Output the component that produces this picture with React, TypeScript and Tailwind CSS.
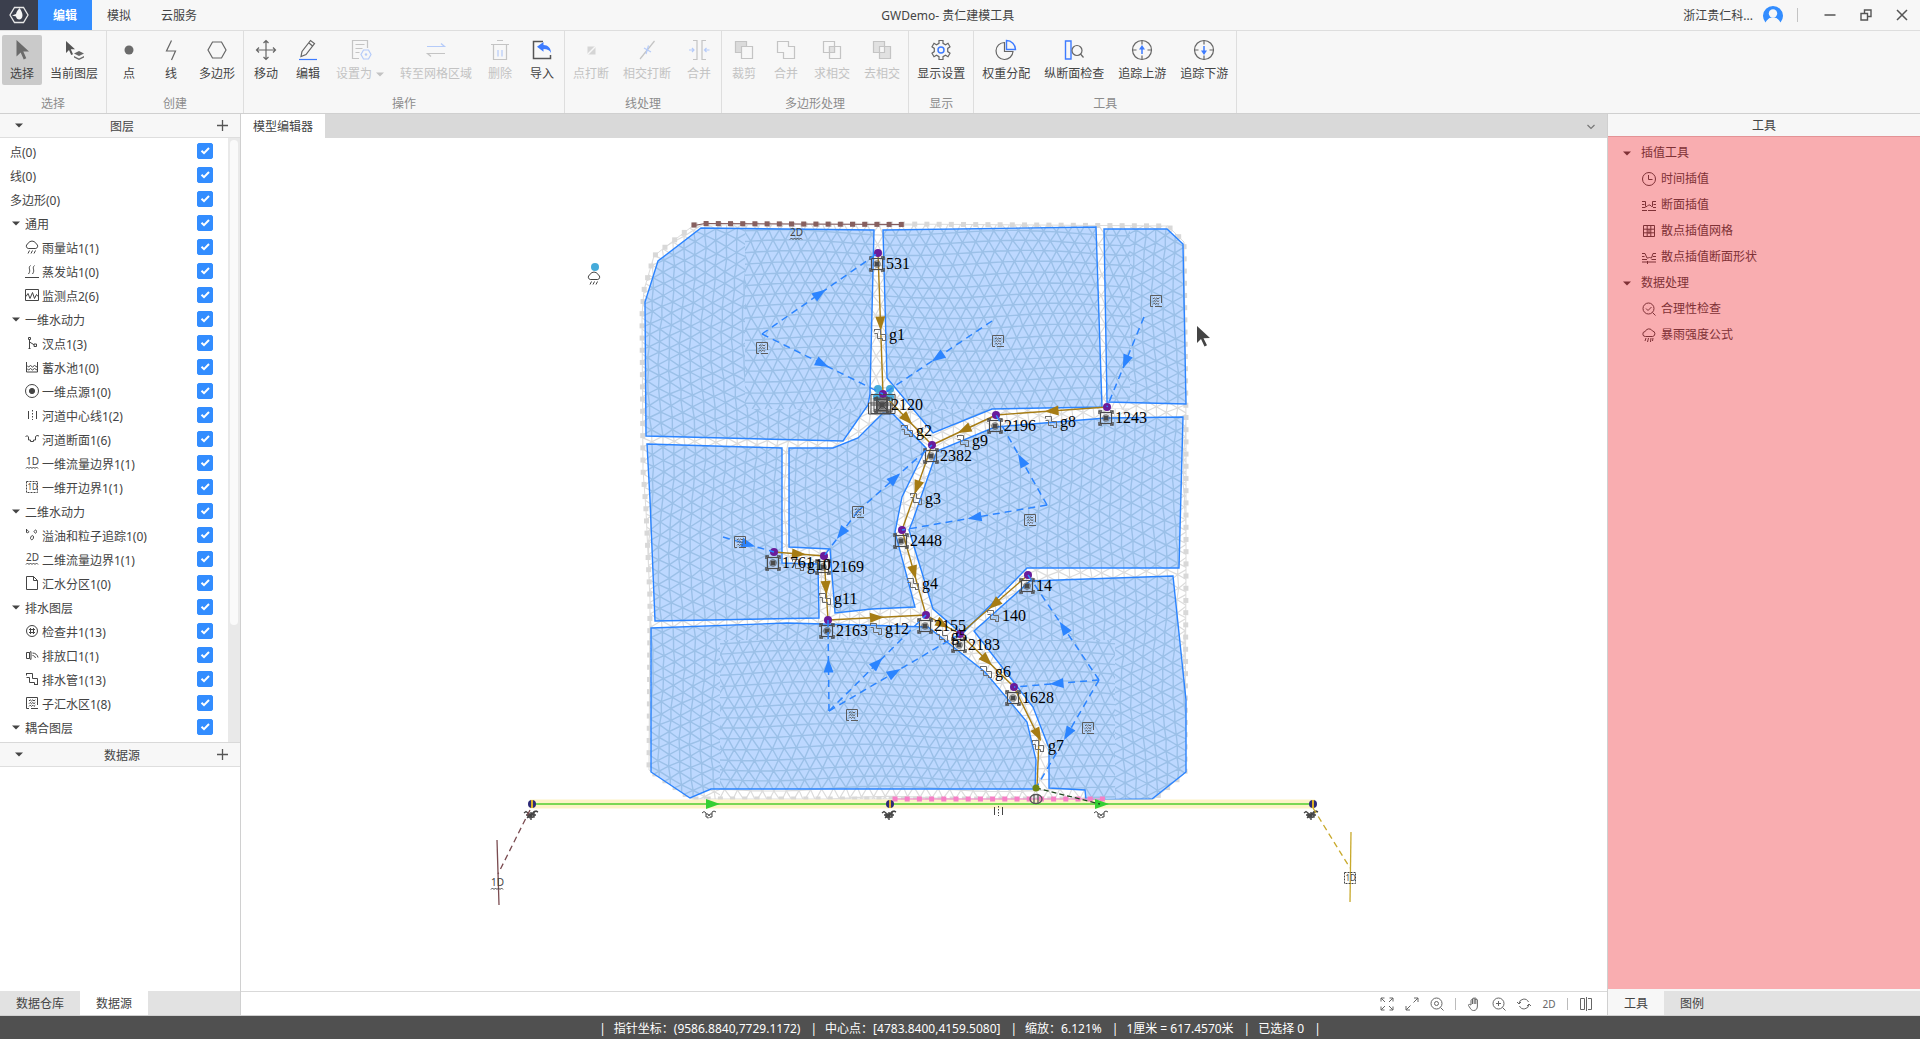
import React from 'react';

type Pt = [number, number];

/* ---------- small icons (14x14) ---------- */

const glyphs: Record<string, React.ReactNode> = {
  rain: <path d="M3.200 8.500A2.500 2.500 0 0 1 3 3.700A4.200 3.800 0 0 1 11 3.700A2.500 2.500 0 0 1 10.800 8.500zM4.500 10.500L3 13.500M7.500 10.500L6 13.500M10.500 10.500L9 13.500" />,
  steam: <path d="M0 13.500h14M5.500 1.500C2.500 4 6.500 6 3.500 10M9.500 1.500C6.500 4 10.500 6 7.500 10" />,
  monitor: <path d="M.5 1.500h13v11H.5zM1 8.500l2-3 2 5 2.500-6 2 6 2-4 1.500 2" />,
  branch: <path d="M4.500 3.500v9M4.500 6l5 3M3.500 1.500h2v2h-2zM9 8h2.500v2.500H9zM3.500 12.500h2" />,
  pond: <path d="M1.500 2v10h11V2M2 5.500l1.500 1.500 2-1.500 2 1.500 2-1.500 2.500 1.500M2 8.500l1.500 1.500 2-1.500 2 1.500 2-1.500 2.500 1.500" />,
  source: <><circle cx="7" cy="7" r="6.500" /><circle cx="7" cy="7" r="2.600" fill="currentColor" /></>,
  center: <><path d="M3.500 3v8M11.500 3v8" /><path d="M7.500 2v10" strokeDasharray="1.500 1.500" /></>,
  section: <path d="M.5 5l1.500-1.500L3.500 5v3M3.500 8h2v1.500h3V8h2V4.500l1.500-1 2 .5" />,
  one: <><text x="1" y="8.500" fontSize="10" fill="currentColor" stroke="none">1D</text><path d="M1 12.500L2.500 11 4 12.500 5.500 11 7 12.500 8.500 11 10 12.500 11.500 11 13 12.500" /></>,
  two: <><text x="1" y="8.500" fontSize="10" fill="currentColor" stroke="none">2D</text><path d="M1 12.500L2.500 11 4 12.500 5.500 11 7 12.500 8.500 11 10 12.500 11.500 11 13 12.500" /></>,
  open: <><path d="M1.500 1.500h11v11h-11z" strokeDasharray="2 1" /><text x="2.500" y="9.800" fontSize="8" fill="currentColor" stroke="none">1D</text></>,
  drops: <path d="M1.500 1v3.500c2.500 1 3.500-1.500 0-2.500M9 3.500c1-2 2.500-2 2.500 0s-1.500 2.500-2.500 0zM5.500 10.500c0-3 3-4 3-1.500s-2 4-3 1.500z" />,
  doc: <path d="M1.500.5h7l4 4v9h-11zM8.500.5v4h4" />,
  well: <><circle cx="7" cy="7" r="5.500" /><path d="M5.500 4v6M8.500 4v6M4 5.500h6M4 8.500h6" /></>,
  outfall: <path d="M1.500 4.500h3v6h-3zM4.500 4.500l1.500-1v8l-1.500-1M7.500 5c3 0 5 2 5.500 4.500M7.500 7.500c1.500 0 2.500 1 3 2.500" />,
  pipe: <path d="M1 1.500H7.500V6.500H12.500V13M1.500 5.500H4.500V10.500H9.500V13M1.500 1.500V3.500M9.500 12.500H12.500" />,
  waves: <path d="M12.500 9V1.500H1.500V12.500H4M6 12.500H13M4 5L5.200 3.800 6.500 5 7.800 3.800 9 5 10.300 3.800M4 7.700L5.200 6.500 6.500 7.700 7.800 6.500 9 7.700 10.300 6.500M4 10.400L5.200 9.200 6.500 10.400 7.800 9.200 9 10.400 10.300 9.200" />,
  clock: <><circle cx="7" cy="7" r="6.500" /><path d="M6.500 3v4.500h4" /></>,
  profile: <path d="M0 3.500H3.500V8.500H5L6.500 7H8L9.500 8.500H10.500V3.500H14M0 6.500H2.500M11.500 6.500H14M0 9.500H3.500M11 9.500H14M0 12.500H5M6 12.500H14" />,
  profileFill: <path d="M0 3.500H3L5 8H6.500L7.500 7 8.500 8H9.500L11 3.500H14M0 6.500H2.500M11 6.500H14M0 9.500H5M9.500 9.500H14M0 12H14M5.500 11V14" />,
  mesh: <path d="M1.500 1.500h11v11h-11zM5.200 1.500v11M8.800 1.500v11M1.500 5.200h11M1.500 8.800h11M7 5v5" />,
  check: <><circle cx="6.500" cy="6.500" r="5.500" /><path d="M4 6.500l2 2 3.500-3.500M10.500 10.500l3 3" /></>,
  storm: <path d="M3.500 8.500a2.500 2.500 0 0 1-.3-5A4 4 0 0 1 10.500 3a2.800 2.800 0 0 1 .2 5.500zM4 10l-1 3M6.500 10l-1 4M9 10l-.5 4M11 10l-.5 3" />,
};

const Glyph = ({ name }: { name: string }) => (
  <svg width="14" height="14" viewBox="0 0 14 14" fill="none" stroke="currentColor" className="shrink-0" aria-hidden="true">
    {glyphs[name]}
  </svg>
);

const Caret = () => (
  <svg width="8" height="5" viewBox="0 0 8 5" className="shrink-0" aria-hidden="true">
    <path d="M0 .5h8L4 4.500z" fill="currentColor" />
  </svg>
);

/* ---------- ribbon ---------- */

const B = '#3d7bff';

const toolIcons: Record<string, React.ReactNode> = {
  cursor: <path d="M5.500 1v16.500l4.200-4 3 7 2.600-1.200-3-6.800h5.700z" fill="#6b6b6b" stroke="none" />,
  cursorLayer: <><path d="M3 2v12l3-3 2.200 5 1.800-.8-2.200-5H12z" fill="#555" stroke="none" /><path d="M11 14.500l5-2.500 5 2.500-5 2.500zM11 17l5 2.500 5-2.500v1.500L16 21l-5-2.500z" fill="#666" stroke="none" /></>,
  dot: <circle cx="11" cy="11" r="4.500" fill="#6b6b6b" stroke="none" />,
  line: <path d="M11.500 1.500L6.500 12h9l-4 9" />,
  hexagon: <path d="M6.500 3h9l4.500 8-4.500 8h-9L2 11z" />,
  move: <path d="M11 1.500v19M1.500 11h19M8.500 4L11 1.500 13.500 4M8.500 18l2.500 2.500 2.500-2.500M4 8.500L1.500 11 4 13.500M18 8.500l2.500 2.500-2.500 2.500" />,
  pencil: <><path d="M4 17.500l1-5L13.500 1.500l4 3L9 15.500zM12 4l3.500 3" /><path d="M2 20.500h18" stroke={B} /></>,
  setAs: <><path d="M9 19.500H2.500v-18h15V9M5.500 5.500h9M5.500 9.500h7M5.500 13.500h4" /><path d="M13.500 11h5l2.500 4.500-2.500 4.500h-5L11 15.500z" stroke={B} /><circle cx="16" cy="15.500" r="1.200" fill={B} stroke="none" /></>,
  convert: <><path d="M2 7.500h17.500L16 4.500" stroke={B} /><path d="M20 14.500H2.500l3.500 3" /></>,
  trash: <><path d="M2 5.500h18M8 1.500h6M4.500 6v14.500h13V6" /><path d="M9 11v6.500M13 11v6.500" stroke={B} /></>,
  importIn: <><path d="M12 2.500H2.500v17h17V16" stroke="#555" strokeWidth="1.500" /><path d="M12.500 3L6 7.800l6.500 5V10c4 0 6 1 7.500 4 0-5-3-8-7.500-8z" fill={B} stroke="none" /></>,
  splitPoint: <><path d="M7.500 7.500h8v8h-8z" fill="#999" stroke="none" /><path d="M7 16l9-9" stroke="#f7f7f7" strokeWidth="1.500" /></>,
  splitCross: <><path d="M4 20L18.500 2" /><path d="M8 9l7 4M12.500 6.500L10 15" stroke={B} /></>,
  merge: <><path d="M5 1.500h4v19H5M18 1.500h-4v19h4" /><path d="M1 11h5M4 9l2 2-2 2M21.500 11h-5M18.500 9l-2 2 2 2" stroke={B} /></>,
  clip: <><path d="M2.500 2.500h11v11h-11z" fill="#aaa" /><path d="M8.500 7.500h11v12h-11z" fill="#f7f7f7" /></>,
  union: <path d="M2.500 2.500h11v5h6v12h-11v-6h-6z" />,
  intersect: <><path d="M2.500 2.500h11v11h-11zM8.500 7.500h11v12h-11z" /><path d="M8.500 7.500h5v6h-5z" fill="#bbb" /></>,
  exclude: <><path d="M2.500 2.500h11v5h6v12h-11v-6h-6z" fill="#bbb" /><path d="M8.500 7.500h5v6h-5z" fill="#f7f7f7" /></>,
  gear: <><path d="M9 1.500h4v2.800l2.500 1.400L18 4.300l2 3.500-2.300 1.600v3.200l2.300 1.600-2 3.500-2.500-1.400L13 17.700v2.800H9v-2.800l-2.500-1.400L4 17.700l-2-3.500 2.300-1.600V9.400L2 7.800l2-3.500 2.500 1.400L9 4.300z" /><circle cx="11" cy="11" r="3" stroke={B} strokeWidth="1.500" /></>,
  pie: <><path d="M9.500 3.500a8.500 8.500 0 1 0 8.500 9H9.500z" /><path d="M11.500 1.500v9h9a9 9 0 0 0-9-9z" stroke={B} strokeWidth="1.400" /></>,
  longSection: <><path d="M2.500 2h5.500v18H2.500z" stroke={B} strokeWidth="1.400" /><circle cx="14" cy="11.500" r="5" /><path d="M17.500 15l3 3.500" /></>,
  traceUp: <><circle cx="11" cy="11" r="9.500" /><path d="M11 1.500v4M11 16.500v4M1.500 11h4M16.500 11h4" /><path d="M11 15V8.500" stroke={B} strokeWidth="1.500" /><path d="M8 10.500l3-4.500 3 4.500z" fill={B} stroke="none" /></>,
  traceDown: <><circle cx="11" cy="11" r="9.500" /><path d="M11 1.500v4M11 16.500v4M1.500 11h4M16.500 11h4" /><path d="M11 7v6.500" stroke={B} strokeWidth="1.500" /><path d="M8 11.500l3 4.500 3-4.500z" fill={B} stroke="none" /></>,
};

type Tool = { label: string; icon: string; active?: boolean; disabled?: boolean; menu?: boolean };

const ribbon: { name: string; tools: Tool[] }[] = [
  { name: '选择', tools: [{ label: '选择', icon: 'cursor', active: true }, { label: '当前图层', icon: 'cursorLayer' }] },
  { name: '创建', tools: [{ label: '点', icon: 'dot' }, { label: '线', icon: 'line' }, { label: '多边形', icon: 'hexagon' }] },
  {
    name: '操作',
    tools: [
      { label: '移动', icon: 'move' },
      { label: '编辑', icon: 'pencil' },
      { label: '设置为', icon: 'setAs', disabled: true, menu: true },
      { label: '转至网格区域', icon: 'convert', disabled: true },
      { label: '删除', icon: 'trash', disabled: true },
      { label: '导入', icon: 'importIn' },
    ],
  },
  {
    name: '线处理',
    tools: [
      { label: '点打断', icon: 'splitPoint', disabled: true },
      { label: '相交打断', icon: 'splitCross', disabled: true },
      { label: '合并', icon: 'merge', disabled: true },
    ],
  },
  {
    name: '多边形处理',
    tools: [
      { label: '裁剪', icon: 'clip', disabled: true },
      { label: '合并', icon: 'union', disabled: true },
      { label: '求相交', icon: 'intersect', disabled: true },
      { label: '去相交', icon: 'exclude', disabled: true },
    ],
  },
  { name: '显示', tools: [{ label: '显示设置', icon: 'gear' }] },
  {
    name: '工具',
    tools: [
      { label: '权重分配', icon: 'pie' },
      { label: '纵断面检查', icon: 'longSection' },
      { label: '追踪上游', icon: 'traceUp' },
      { label: '追踪下游', icon: 'traceDown' },
    ],
  },
];

const RibbonButton = ({ tool }: { tool: Tool }) => (
  <button
    type="button"
    disabled={tool.disabled}
    className={`flex h-[50px] min-w-10 flex-col items-center gap-1 rounded-xs px-1.5 pt-1 ${tool.active ? 'bg-[#cacaca]' : ''} ${tool.disabled ? 'text-[#c3c3c3]' : 'text-[#444]'}`}
  >
    <svg width="22" height="22" viewBox="0 0 22 22" fill="none" stroke="#666" strokeWidth="1.200" className={tool.disabled ? 'opacity-35' : ''} aria-hidden="true">
      {toolIcons[tool.icon]}
    </svg>
    <span className="flex items-center gap-1 leading-[18px]">
      {tool.label}
      {tool.menu && <span className="w-[10px]"><Caret /></span>}
    </span>
  </button>
);

const Ribbon = () => (
  <div className="flex h-[83px] shrink-0 border-b border-[#d0d0d0]">
    {ribbon.map((group) => (
      <section key={group.name} className="flex flex-col border-r border-[#dedede] px-0.5 pt-1 pb-px">
        <div className="flex gap-0.5">
          {group.tools.map((tool) => (
            <RibbonButton key={tool.label} tool={tool} />
          ))}
        </div>
        <h2 className="mt-auto text-center leading-4 text-[#8c8c8c]">{group.name}</h2>
      </section>
    ))}
  </div>
);

/* ---------- title bar ---------- */

const TitleBar = () => (
  <header className="flex h-[31px] shrink-0 items-stretch border-b border-[#dedede]">
    <div className="flex w-[38px] items-center justify-center bg-[#3b3f4d]">
      <svg width="20" height="18" viewBox="0 0 20 18" fill="none" stroke="#e8e8e8" strokeWidth="1.300" aria-label="logo">
        <path d="M5.500 1.500h9L19 9l-4.500 7.500h-9L1 9z" />
        <path d="M10.500 2c2 3 3 5 3 7.500 0 5-6 5-6.500 1L3 9.500 7 8c.5-2.500 2-4 3.500-6z" fill="#f5f5f5" stroke="none" />
      </svg>
    </div>
    <nav className="flex">
      <a href="#edit" className="flex items-center bg-[#338dff] px-[15px] pt-px font-semibold text-white">编辑</a>
      <a href="#simulate" className="flex items-center px-[15px] pt-px">模拟</a>
      <a href="#cloud" className="flex items-center px-[15px] pt-px">云服务</a>
    </nav>
    <h1 className="flex flex-1 items-center justify-center pt-px">GWDemo- 贵仁建模工具</h1>
    <div className="flex items-center">
      <span className="pt-px">浙江贵仁科...</span>
      <svg width="20" height="20" viewBox="0 0 20 20" className="ml-2.5" aria-hidden="true">
        <path d="M2.500 17.500a10 10 0 1 1 15 0c-1-2-2.500-3.500-4.500-4.500H7c-2 1-3.500 2.500-4.500 4.500z" fill="#338dff" />
        <circle cx="10" cy="8.500" r="4.200" fill="#f7f7f7" />
        <path d="M4 17.500c1-4 3-5 6-5s5 1 6 5z" fill="#f7f7f7" />
      </svg>
      <span className="mx-[14px] h-[14px] w-px bg-[#c4c4c4]" />
      <button type="button" aria-label="最小化" className="flex w-9 justify-center">
        <svg width="12" height="12" viewBox="0 0 12 12" stroke="#555" strokeWidth="1.500"><path d="M.5 6h11" /></svg>
      </button>
      <button type="button" aria-label="还原" className="flex w-9 justify-center">
        <svg width="12" height="12" viewBox="0 0 12 12" fill="none" stroke="#555" strokeWidth="1.400"><path d="M1 4.500h6.500V11H1zM4.500 4.500V1H11v6.500H7.500" /></svg>
      </button>
      <button type="button" aria-label="关闭" className="flex w-9 justify-center">
        <svg width="12" height="12" viewBox="0 0 12 12" stroke="#555" strokeWidth="1.500"><path d="M1 1l10 10M11 1L1 11" /></svg>
      </button>
    </div>
  </header>
);

/* ---------- left panel ---------- */

type Layer = { label: string; kind: 'root' | 'group' | 'leaf'; icon?: string };

const layers: Layer[] = [
  { label: '点(0)', kind: 'root' },
  { label: '线(0)', kind: 'root' },
  { label: '多边形(0)', kind: 'root' },
  { label: '通用', kind: 'group' },
  { label: '雨量站1(1)', kind: 'leaf', icon: 'rain' },
  { label: '蒸发站1(0)', kind: 'leaf', icon: 'steam' },
  { label: '监测点2(6)', kind: 'leaf', icon: 'monitor' },
  { label: '一维水动力', kind: 'group' },
  { label: '汊点1(3)', kind: 'leaf', icon: 'branch' },
  { label: '蓄水池1(0)', kind: 'leaf', icon: 'pond' },
  { label: '一维点源1(0)', kind: 'leaf', icon: 'source' },
  { label: '河道中心线1(2)', kind: 'leaf', icon: 'center' },
  { label: '河道断面1(6)', kind: 'leaf', icon: 'section' },
  { label: '一维流量边界1(1)', kind: 'leaf', icon: 'one' },
  { label: '一维开边界1(1)', kind: 'leaf', icon: 'open' },
  { label: '二维水动力', kind: 'group' },
  { label: '溢油和粒子追踪1(0)', kind: 'leaf', icon: 'drops' },
  { label: '二维流量边界1(1)', kind: 'leaf', icon: 'two' },
  { label: '汇水分区1(0)', kind: 'leaf', icon: 'doc' },
  { label: '排水图层', kind: 'group' },
  { label: '检查井1(13)', kind: 'leaf', icon: 'well' },
  { label: '排放口1(1)', kind: 'leaf', icon: 'outfall' },
  { label: '排水管1(13)', kind: 'leaf', icon: 'pipe' },
  { label: '子汇水区1(8)', kind: 'leaf', icon: 'waves' },
  { label: '耦合图层', kind: 'group' },
];

const indent = { root: 'pl-2.5', group: 'pl-3', leaf: 'pl-[25px]' };

const LayerRow = ({ layer }: { layer: Layer }) => (
  <li>
    <label className={`flex h-6 items-center pr-[15px] ${indent[layer.kind]}`}>
      {layer.kind === 'group' && <span className="mr-[5px]"><Caret /></span>}
      {layer.icon && <span className="mr-[3px]"><Glyph name={layer.icon} /></span>}
      <span className="flex-1 pt-[3px]">{layer.label}</span>
      <span className="grid">
        <input type="checkbox" defaultChecked className="col-start-1 row-start-1 size-4 appearance-none rounded-xs border border-[#338dff] checked:bg-[#338dff]" />
        <svg width="16" height="16" viewBox="0 0 16 16" fill="none" stroke="#fff" strokeWidth="2" className="pointer-events-none col-start-1 row-start-1" aria-hidden="true">
          <path d="M4.500 7.800l2.500 2.400 5-5.200" />
        </svg>
      </span>
    </label>
  </li>
);

const PanelHeader = ({ title }: { title: string }) => (
  <div className="flex h-6 shrink-0 items-center border-b border-[#dedede] pr-3 pl-[15px]">
    <button type="button" aria-label={`折叠${title}`} className="w-3"><Caret /></button>
    <h2 className="flex-1 pt-0.5 text-center">{title}</h2>
    <button type="button" aria-label={`添加${title}`}>
      <svg width="11" height="11" viewBox="0 0 11 11" stroke="#555" strokeWidth="1.300"><path d="M5.500 0v11M0 5.500h11" /></svg>
    </button>
  </div>
);

const LeftPanel = () => (
  <aside className="flex w-[241px] shrink-0 flex-col border-r border-[#d0d0d0]">
    <PanelHeader title="图层" />
    <div className="flex h-[604px] shrink-0 bg-white">
      <ul className="flex-1 overflow-hidden pt-px">
        {layers.map((layer) => (
          <LayerRow key={layer.label} layer={layer} />
        ))}
      </ul>
      <div className="w-3 bg-[#e9e9e9] px-0.5 pt-0.5">
        <div className="h-[485px] w-2 rounded-full bg-[#fafafa]" />
      </div>
    </div>
    <div className="border-t border-[#d9d9d9]">
      <PanelHeader title="数据源" />
    </div>
    <div className="flex-1 bg-white" />
    <div className="flex h-6 shrink-0 bg-[#e2e2e2]">
      <button type="button" className="px-4 pt-0.5">数据仓库</button>
      <button type="button" className="bg-white px-4 pt-0.5">数据源</button>
    </div>
  </aside>
);

/* ---------- map ---------- */

const catchments: string[] = [
  '701,228 874,230 870,394 868,405 843,441 646,436 645,302 658,261',
  '883,230 1096,227 1102,407 992,409 933,433 887,378',
  '1104,229 1167,229 1183,244 1186,404 1107,402',
  '1183,417 1106,418 995,427 937,451 913,520 909,530 933,609 962,634 1027,568 1179,568',
  '789,448 833,448 858,438 883,413 893,414 926,448 902,497 895,532 915,607 872,609 835,613 830,549 789,547',
  '647,444 782,448 782,563 818,564 819,618 655,621 650,500',
  '651,628 787,623 860,625 928,627 985,672 1027,722 1036,760 1035,789 711,789 690,798 651,772',
  '1173,576 1030,581 974,631 1033,707 1049,748 1049,788 1085,790 1086,800 1152,799 1186,772 1186,700',
];

const outline: Pt[] = [
  [694, 225], [664, 248], [654, 256], [644, 290], [642, 315], [643, 470], [646, 510], [650, 600], [649, 770], [692, 799],
  [895, 799], [1103, 799], [1154, 799], [1185, 773], [1186, 570], [1186, 420], [1184, 242], [1168, 226], [901, 224],
];

// triangulated lattice, gently warped so that it reads as an unstructured mesh
const buildMesh = (x0: number, x1: number, y0: number, y1: number, columns: boolean) => {
  const along = 12;
  const across = 10.5;
  const warp = (x: number, y: number): string => {
    const wx = x + 2.6 * Math.sin(y / 31 + x / 57) + 0.6 * Math.sin(x * 1.7 + y * 2.3);
    const wy = y + 2.6 * Math.sin(x / 37 - y / 61) + 0.6 * Math.sin(x * 2.1 - y * 1.3);
    return `${wx.toFixed(1)} ${wy.toFixed(1)}`;
  };
  const at = (i: number, j: number) => {
    const a = i * along + (j % 2 ? along / 2 : 0);
    const b = j * across;
    return columns ? warp(x0 + b, y0 + a) : warp(x0 + a, y0 + b);
  };
  const ni = Math.ceil((columns ? y1 - y0 : x1 - x0) / along) + 1;
  const nj = Math.ceil((columns ? x1 - x0 : y1 - y0) / across) + 1;
  let d = '';
  for (let j = 0; j < nj; j++) {
    for (let i = 0; i < ni; i++) {
      const k = j % 2 ? i + 1 : i;
      d += `M${at(i + 1, j)}L${at(i, j)}L${at(k, j + 1)}`;
      d += `M${at(i, j)}L${at(k - 1, j + 1)}`;
    }
  }
  return d;
};

const rowMesh = buildMesh(640, 1190, 222, 802, false);
const columnMesh = buildMesh(640, 1190, 222, 802, true);
const rowZone = 'M745 220H1130V409H745zM720 640H1115V802H720z';
const columnZone = 'M638 220H745V409H1130V220H1190V802H1115V640H720V802H638z';

// evenly spaced markers along a polyline
const markers = (pts: Pt[], step: number): Pt[] => {
  const out: Pt[] = [];
  let rest = 0;
  for (let i = 0; i < pts.length - 1; i++) {
    const [ax, ay] = pts[i];
    const [bx, by] = pts[i + 1];
    const len = Math.hypot(bx - ax, by - ay);
    let t = rest;
    for (; t < len; t += step) out.push([ax + ((bx - ax) * t) / len, ay + ((by - ay) * t) / len]);
    rest = t - len;
  }
  return out;
};

const Markers = ({ pts, step, color }: { pts: Pt[]; step: number; color: string }) => (
  <g fill={color}>
    {markers(pts, step).map(([x, y], i) => (
      <rect key={i} x={x - 2.5} y={y - 2.5} width="5" height="5" />
    ))}
  </g>
);

const nodes: Record<string, Pt> = {
  '531': [878, 253], '2120': [883, 394], '2382': [932, 445], '2196': [996, 415], '1243': [1107, 407], '2448': [902, 530],
  '1761': [774, 552], '2169': [824, 556], '2163': [828, 620], '2155': [926, 615], '2183': [960, 634], '14': [1028, 575], '1628': [1014, 687],
};
const outlet: Pt = [1036, 788];

const pipes: { name: string; from: Pt; to: Pt }[] = [
  { name: 'g1', from: nodes['531'], to: nodes['2120'] },
  { name: 'g2', from: nodes['2120'], to: nodes['2382'] },
  { name: 'g3', from: nodes['2382'], to: nodes['2448'] },
  { name: 'g4', from: nodes['2448'], to: nodes['2155'] },
  { name: 'g5', from: nodes['2155'], to: nodes['2183'] },
  { name: 'g6', from: nodes['2183'], to: nodes['1628'] },
  { name: 'g8', from: nodes['1243'], to: nodes['2196'] },
  { name: 'g9', from: nodes['2196'], to: nodes['2382'] },
  { name: 'g10', from: nodes['1761'], to: nodes['2169'] },
  { name: 'g11', from: nodes['2169'], to: nodes['2163'] },
  { name: 'g12', from: nodes['2163'], to: nodes['2155'] },
  { name: '140', from: nodes['14'], to: nodes['2183'] },
];

const runoff: [Pt, Pt][] = [
  [[762, 334], nodes['531']],
  [[762, 334], nodes['2120']],
  [[992, 321], nodes['2120']],
  [[1144, 317], nodes['1243']],
  [[1047, 505], nodes['2196']],
  [[1047, 505], nodes['2448']],
  [[858, 511], nodes['2382']],
  [[858, 511], nodes['2169']],
  [[723, 537], nodes['1761']],
  [[829, 711], nodes['2163']],
  [[829, 711], nodes['2155']],
  [[829, 711], nodes['2183']],
  [[1099, 680], nodes['14']],
  [[1099, 680], nodes['1628']],
  [[1099, 680], outlet],
];

const catchmentIcons: Pt[] = [[762, 348], [998, 341], [1156, 301], [1030, 520], [858, 512], [740, 542], [852, 715], [1088, 728]];

const mid = (a: Pt, b: Pt): Pt => [Math.round((a[0] + b[0]) / 2), Math.round((a[1] + b[1]) / 2)];

const Arrow = ({ from, to, at, color }: { from: Pt; to: Pt; at?: Pt; color: string }) => {
  const [x, y] = at ?? [(from[0] + to[0]) / 2, (from[1] + to[1]) / 2];
  const angle = (Math.atan2(to[1] - from[1], to[0] - from[0]) * 180) / Math.PI;
  return <path d="M-7 -5L7 0L-7 5z" fill={color} transform={`translate(${x} ${y}) rotate(${angle})`} />;
};

const MapGlyph = ({ name, x, y, color = '#444' }: { name: string; x: number; y: number; color?: string }) => (
  <g transform={`translate(${x - 7} ${y - 7})`} fill="none" stroke={color} style={{ color }}>
    {glyphs[name]}
  </g>
);

const Manhole = ({ x, y }: { x: number; y: number }) => (
  <g fill="none" stroke="#4a4a4a">
    <rect x={x - 5.5} y={y - 5.5} width="11" height="11" strokeWidth="1.200" />
    <path d={`M${x - 7} ${y - 4}v-3h3M${x + 7} ${y - 4}v-3h-3M${x - 7} ${y + 4}v3h3M${x + 7} ${y + 4}v3h-3`} strokeWidth="1.400" />
    <circle cx={x} cy={y} r="3.500" strokeWidth=".6" />
    <path d={`M${x - 2} ${y - 2}h4v4h-4z`} fill="#4a4a4a" />
  </g>
);

const RiverNode = ({ x }: { x: number }) => (
  <g>
    <circle cx={x} cy="804" r="4" fill="#2d2a78" />
    <path d={`M${x} 800v8`} stroke="#f0c020" strokeWidth="1.800" />
  </g>
);

const RiverSection = ({ x, heavy }: { x: number; heavy?: boolean }) => (
  <g fill="none" stroke="#444" strokeWidth={heavy ? 1.4 : 1}>
    <path d={`M${x - 7} 813l2-1.500 2 1.500v4h2v1.500M${x - 3} 814h2l1 2 1-2h2M${x + 1} 818v-1h2v-5l2-1 2 1`} />
    {heavy && <path d={`M${x - 4} 818l8-7M${x - 5} 815h10M${x} 812v8`} />}
  </g>
);

const MapView = () => (
  <svg viewBox="241 138 1366 853" className="h-full w-full" role="img" aria-label="管网模型图">
    <defs>
      <clipPath id="outlineClip"><polygon points={outline.map((p) => p.join(',')).join(' ')} /></clipPath>
      <clipPath id="blueClip">{catchments.map((c) => <polygon key={c} points={c} />)}</clipPath>
      <clipPath id="rowClip"><path d={rowZone} /></clipPath>
      <clipPath id="columnClip"><path d={columnZone} /></clipPath>
      <g id="mesh" fill="none">
        <g clipPath="url(#rowClip)"><path d={rowMesh} /></g>
        <g clipPath="url(#columnClip)"><path d={columnMesh} /></g>
      </g>
    </defs>

    <g clipPath="url(#outlineClip)"><use href="#mesh" stroke="#dcdcdc" strokeWidth="1.200" /></g>
    <polygon points={outline.map((p) => p.join(',')).join(' ')} fill="none" stroke="#dcdcdc" />
    <Markers pts={[...outline, outline[0]]} step={12.2} color="#d8d8d8" />

    <g fill="#bdd8ff">{catchments.map((c) => <polygon key={c} points={c} />)}</g>
    <g clipPath="url(#blueClip)"><use href="#mesh" stroke="#9bc0e8" strokeWidth="1.400" /></g>
    <g fill="none" stroke="#2b84ff" strokeWidth="1.400">{catchments.map((c) => <polygon key={c} points={c} />)}</g>

    {/* 2D inflow boundary */}
    <path d="M694 225.500L705 223.500L901 224.500" fill="none" stroke="#7f5558" />
    <Markers pts={[[694, 225], [705, 223.5], [902, 224.5]]} step={12.2} color="#87605f" />
    <MapGlyph name="two" x={796} y={234} />

    {/* river */}
    <path d="M530 804H1315" stroke="#fdf3c6" strokeWidth="9" />
    <path d="M532 804H1313" stroke="#4fce2e" strokeWidth="1.500" />
    <path d="M895 799H1103" stroke="#f57fc4" />
    <Markers pts={[[895, 799], [1104, 799]]} step={12.2} color="#f77fc6" />
    <Arrow from={[0, 0]} to={[1, 0]} at={[713, 804]} color="#35cf33" />
    <Arrow from={[0, 0]} to={[1, 0]} at={[1102, 804]} color="#35cf33" />
    <RiverNode x={532} />
    <RiverNode x={890} />
    <RiverNode x={1313} />
    <RiverSection x={531} heavy />
    <RiverSection x={709} />
    <RiverSection x={889} heavy />
    <RiverSection x={1101} />
    <RiverSection x={1311} heavy />
    <MapGlyph name="center" x={998} y={811} />

    {/* 1D boundaries */}
    <g fill="none" strokeWidth="1.300">
      <path d="M497 840L499 905" stroke="#7a4b50" />
      <path d="M530 810L498 874" stroke="#7a4b50" strokeDasharray="6 4" />
      <path d="M1351 832L1350 902" stroke="#c8a92b" />
      <path d="M1313 808L1350 868" stroke="#c8a92b" strokeDasharray="6 4" />
    </g>
    <MapGlyph name="one" x={497} y={884} />
    <MapGlyph name="open" x={1350} y={878} />

    {/* rain gauge */}
    <circle cx="595" cy="267" r="4" fill="#45abda" />
    <MapGlyph name="rain" x={594} y={278} />

    {/* pipes */}
    <g stroke="#a67c14" strokeWidth="1.400" fill="none">
      {pipes.map((p) => <path key={p.name} d={`M${p.from}L${p.to}`} />)}
      <path d="M1014 687L1039 738L1037 788" />
    </g>
    {pipes.map((p) => <Arrow key={p.name} from={p.from} to={p.to} color="#a67c14" />)}
    <Arrow from={[1014, 687]} to={[1040, 738]} at={[1038, 735]} color="#a67c14" />
    {pipes.map((p) => {
      const [x, y] = mid(p.from, p.to);
      return <MapGlyph key={p.name} name="pipe" x={x - 1} y={y + 11} color="#6b6b6b" />;
    })}
    <MapGlyph name="pipe" x={1038} y={746} color="#6b6b6b" />

    {/* monitoring points around 2120 */}
    <g fill="#45abda">
      <circle cx="878" cy="389" r="4" />
      <circle cx="890" cy="389" r="4" />
      <circle cx="877" cy="397" r="4" />
      <circle cx="890" cy="397" r="4" />
    </g>
    {Object.entries(nodes).map(([name, [x, y]]) => (
      <g key={name}>
        <circle cx={x} cy={y} r="4" fill="#6a1b9a" />
        <Manhole x={x - 1} y={y + 11} />
      </g>
    ))}
    <g fill="none" stroke="#4a4a4a">
      <path d="M871 394.500h24v19h-24zM868.500 403h22v11h-22zM874 398h18v14h-18zM877 396v18M887 396v18M871 405h23M878 401l9 9M887 401l-9 9" />
      <path d="M877 399h10v12h-10z" fill="#4a4a4a" fillOpacity=".6" />
    </g>

    {/* runoff directions */}
    <g fill="none" stroke="#2b84ff" strokeWidth="1.500" strokeDasharray="7 5">
      {runoff.map(([a, b], i) => <path key={i} d={`M${a}L${b}`} />)}
    </g>
    {runoff.map(([a, b], i) => <Arrow key={i} from={a} to={b} color="#2b84ff" />)}
    {catchmentIcons.map(([x, y]) => <MapGlyph key={x} name="waves" x={x} y={y} color="#5c5c5c" />)}

    {/* outfall */}
    <path d="M1036 788L1100 804" stroke="#20471f" strokeWidth="1.300" strokeDasharray="5 3" />
    <circle cx="1036" cy="788" r="3.500" fill="#6f8614" />
    <g fill="none" stroke="#555" strokeWidth="1.300"><ellipse cx="1036" cy="799" rx="6" ry="4.500" /><path d="M1034 795v9M1038 795v9" /></g>

    <g fill="#000" fontSize="16" className="font-['Liberation_Serif',serif]">
      {Object.entries(nodes).map(([name, [x, y]]) => <text key={name} x={x + 8} y={y + 16}>{name}</text>)}
      {pipes.map((p) => {
        const [x, y] = mid(p.from, p.to);
        return <text key={p.name} x={x + 8} y={y + 16}>{p.name}</text>;
      })}
      <text x="1048" y="751">g7</text>
    </g>

    <path d="M1197 326v17l4-4 3.500 7.500 2.500-1.300-3.500-7 6.500-.2z" fill="#444" />
  </svg>
);

const viewTools: { label: string; icon?: React.ReactNode; text?: string; divider?: boolean }[] = [
  { label: '全图', icon: <path d="M1 4.500V1h3.500M1 1l4 4M9.500 1H13v3.500M13 1L9 5M1 9.500V13h3.500M1 13l4-4M13 9.500V13H9.500M13 13L9 9" /> },
  { label: '展开', icon: <path d="M9 1h4v4M13 1L8.500 5.500M1 9v4h4M1 13l4.500-4.500" /> },
  { label: '定位', icon: <><circle cx="6.500" cy="6.500" r="5.500" /><circle cx="6.500" cy="6.500" r="2" /><path d="M10.500 10.500l3 3" /></> },
  { label: '平移', divider: true, icon: <path d="M4 8V3.500c0-1.200 1.500-1.200 1.500 0V2c0-1.200 1.700-1.200 1.700 0v-.5c0-1 1.600-1 1.600 0V3c0-1 1.600-1 1.600 0v6c0 3-1.500 4.500-3.700 4.500S4 12.500 1.500 8.500c-.5-1 .8-1.500 1.500-.8zM5.500 3v4M7.200 2v5M8.800 2v5" /> },
  { label: '放大', icon: <><circle cx="6.500" cy="6.500" r="5.500" /><path d="M10.500 10.500l3 3M4 6.500h5M6.500 4v5" /></> },
  { label: '刷新', icon: <path d="M2 6.500A5 5 0 0 1 11.500 5M12 7.500A5 5 0 0 1 2.500 9M0 5l2 2 2-2M10 9l2-2 2 2" /> },
  { label: '二维', text: '2D' },
  { label: '分屏', divider: true, icon: <path d="M1.500 1.500h4v11h-4zM7.500 0v14M9 1.500h3.500v11H9" /> },
];

const Workspace = () => (
  <main className="flex min-w-0 flex-1 flex-col bg-white">
    <div className="flex h-6 shrink-0 items-center justify-between bg-[#d9d9d9]">
      <button type="button" className="h-full bg-white px-3 pt-0.5">模型编辑器</button>
      <button type="button" aria-label="更多标签" className="px-3 pt-0.5">
        <svg width="8" height="6" viewBox="0 0 8 6" fill="none" stroke="#777" strokeWidth="1.200"><path d="M.5 1L4 4.500 7.500 1" /></svg>
      </button>
    </div>
    <div className="min-h-0 flex-1"><MapView /></div>
    <div className="flex h-6 shrink-0 items-center justify-end gap-[11px] border-t border-[#d9d9d9] pt-px pr-[14px]">
      {viewTools.map((tool) => (
        <React.Fragment key={tool.label}>
          {tool.divider && <span className="h-3 w-px bg-[#bbb]" />}
          <button type="button" aria-label={tool.label} className="flex w-[14px] justify-center text-[10px] text-[#666]">
            {tool.text ?? (
              <svg width="14" height="14" viewBox="0 0 14 14" fill="none" stroke="currentColor" className="shrink-0" aria-hidden="true">{tool.icon}</svg>
            )}
          </button>
        </React.Fragment>
      ))}
    </div>
  </main>
);

/* ---------- right panel ---------- */

const toolTree = [
  {
    name: '插值工具',
    items: [
      { label: '时间插值', icon: 'clock' },
      { label: '断面插值', icon: 'profile' },
      { label: '散点插值网格', icon: 'mesh' },
      { label: '散点插值断面形状', icon: 'profileFill' },
    ],
  },
  {
    name: '数据处理',
    items: [
      { label: '合理性检查', icon: 'check' },
      { label: '暴雨强度公式', icon: 'storm' },
    ],
  },
];

const RightPanel = () => (
  <aside className="flex w-[313px] shrink-0 flex-col border-l border-[#d0d0d0]">
    <h2 className="h-[22px] shrink-0 text-center leading-6">工具</h2>
    <div className="flex-1 border-t border-[#e39396] bg-[#f9adb0] pt-[3px] text-[#7f3136]">
      {toolTree.map((group) => (
        <div key={group.name}>
          <button type="button" className="flex h-[26px] w-full items-center gap-2.5 pl-[15px]">
            <Caret />
            {group.name}
          </button>
          {group.items.map((item) => (
            <button key={item.label} type="button" className="flex h-[26px] w-full items-center gap-[5px] pl-[34px]">
              <Glyph name={item.icon} />
              {item.label}
            </button>
          ))}
        </div>
      ))}
    </div>
    <div className="mt-0.5 flex h-6 shrink-0 bg-[#e2e2e2]">
      <button type="button" className="bg-[#f7f7f7] px-4 pt-0.5">工具</button>
      <button type="button" className="px-4 pt-0.5">图例</button>
    </div>
  </aside>
);

const status = ['指针坐标：(9586.8840,7729.1172)', '中心点：[4783.8400,4159.5080]', '缩放：6.121%', '1厘米 = 617.4570米', '已选择 0'];

const App = () => (
  <div className="flex h-screen flex-col overflow-hidden bg-[#f7f7f7] font-['Noto_Sans','Noto_Sans_CJK_SC',sans-serif] text-[12px] leading-4 text-[#444]">
    <TitleBar />
    <Ribbon />
    <div className="flex min-h-0 flex-1">
      <LeftPanel />
      <Workspace />
      <RightPanel />
    </div>
    <footer className="flex h-6 shrink-0 items-center justify-center border-t border-[#d0d0d0] bg-[#505050] pt-0.5 text-white">
      {status.map((text) => (
        <React.Fragment key={text}>
          <span>|</span>
          <span className="px-2.5 pl-2">{text}</span>
        </React.Fragment>
      ))}
      <span>|</span>
    </footer>
  </div>
);

export default App;
